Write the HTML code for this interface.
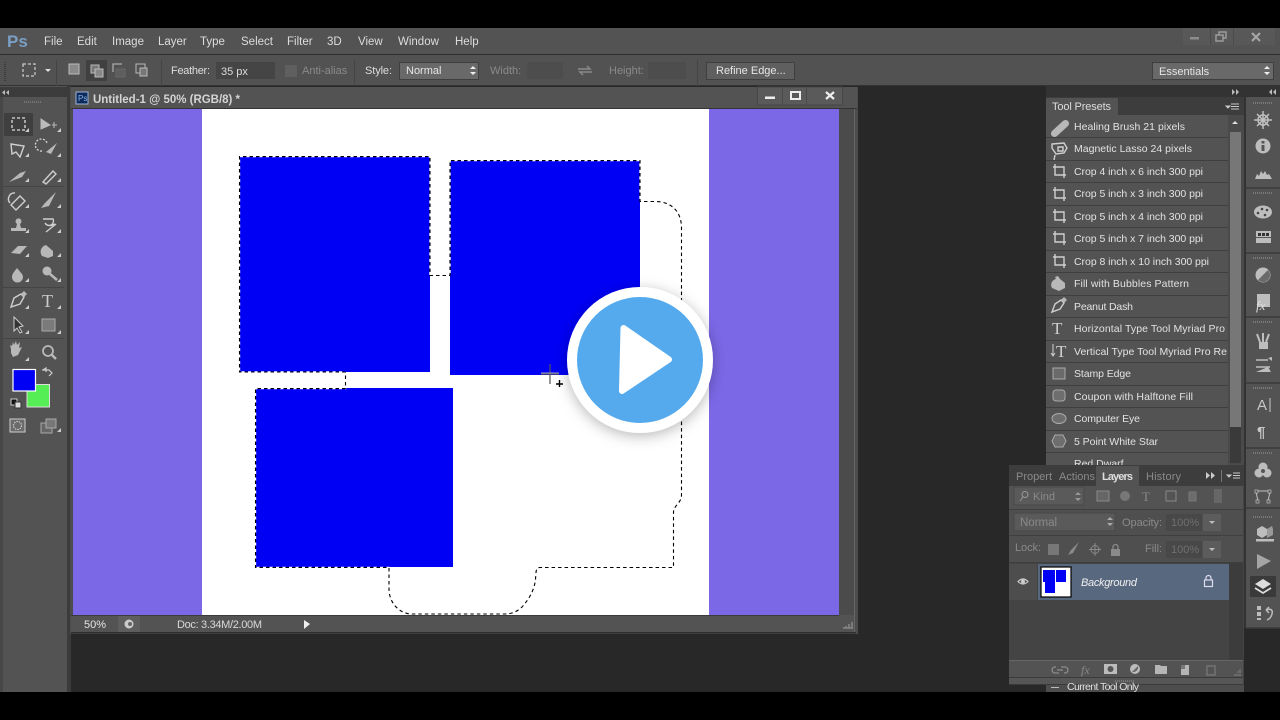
<!DOCTYPE html>
<html><head><meta charset="utf-8"><title>Photoshop</title><style>
html,body{margin:0;padding:0;background:#000;width:1280px;height:720px;overflow:hidden}
svg{display:block;filter:blur(.35px)}
text{font-family:"Liberation Sans",sans-serif;font-size:11px;fill:#dcdcdc}
.m{font-size:11.5px}
.p{font-size:10.5px;fill:#e2e2e2}
.dim{fill:#8a8a8a}
.ic{fill:none;stroke:#cfcfcf;stroke-width:1.4}
.ig{fill:#b8b8b8}
.sep{fill:#3f3f3f}
</style></head><body>
<svg width="1280" height="720" viewBox="0 0 1280 720" xmlns="http://www.w3.org/2000/svg">
<defs>
<filter id="sh" x="-30%" y="-30%" width="160%" height="160%"><feDropShadow dx="0" dy="3" stdDeviation="7" flood-color="#000" flood-opacity=".28"/></filter>
<g id="crop"><path class="ic" d="M-6-4H5V7M-4-7V4H7"/></g>
<path id="sel" d="M345.500 372H239.500V156.500H430V275.500H450V160.500H640V201.500H655C672 201.500 681.500 212 681.500 228V495C681.500 503 674 505 673.500 512V567.500H540C536 567.500 536 570 535.500 580C534 590 530 598 522 607C518 611 512 614 505 614H410C396 612 389 600 389 589V567.500H255.500V388.500H345.500V372"/>
</defs>
<rect width="1280" height="720" fill="#000"/>
<rect y="28" width="1280" height="664" fill="#282828"/>

<!-- menu and options -->
<rect y="28" width="1280" height="26" fill="#535353"/>
<rect y="54" width="1280" height="1" fill="#2e2e2e"/>
<rect y="55" width="1280" height="31" fill="#525252"/>
<rect y="85" width="1280" height="1" fill="#333"/>
<text x="7" y="47" style="font-size:17px;font-weight:bold;fill:#7b9ec4">Ps</text>
<text class="m" x="44" y="45">File</text><text class="m" x="77" y="45">Edit</text><text class="m" x="112" y="45">Image</text><text class="m" x="158" y="45">Layer</text><text class="m" x="200" y="45">Type</text><text class="m" x="241" y="45">Select</text><text class="m" x="287" y="45">Filter</text><text class="m" x="327" y="45">3D</text><text class="m" x="358" y="45">View</text><text class="m" x="398" y="45">Window</text><text class="m" x="455" y="45">Help</text>
<rect x="1183" y="28" width="92" height="17" fill="#585858"/>
<path d="M1210.500 28v17M1233.500 28v17" stroke="#4b4b4b"/>
<rect x="1190" y="37" width="9" height="2.500" fill="#8c8c8c"/>
<path d="M1216 35h7v6h-7zM1219 35v-3h7v6h-3" fill="none" stroke="#9a9a9a" stroke-width="1.500"/>
<path d="M1252 33l8 8M1260 33l-8 8" stroke="#a5a5a5" stroke-width="2.200"/>
<path d="M5 62v20" stroke="#3d3d3d" stroke-width="2" stroke-dasharray="1 1"/>
<rect x="23" y="64" width="12" height="12" fill="none" stroke="#ccc" stroke-width="1.200" stroke-dasharray="3 2"/>
<path d="M45 69h6l-3 3z" fill="#ddd"/>
<path d="M56.500 60v26M161.500 60v26M354.500 60v26M697.500 60v26" stroke="#444"/>
<rect x="69" y="64" width="10" height="10" fill="#8a8a8a" stroke="#bbb"/>
<rect x="86" y="60" width="21" height="21" fill="#404040"/>
<rect x="91" y="65" width="8" height="8" fill="#777" stroke="#bbb"/><rect x="95" y="69" width="8" height="8" fill="#888" stroke="#bbb"/>
<path d="M113 72v-8h9" fill="none" stroke="#aaa" stroke-width="1.300"/><rect x="116" y="69" width="9" height="8" fill="#5e5e5e" stroke="#666"/>
<rect x="136" y="64" width="9" height="9" fill="none" stroke="#bbb"/><rect x="140" y="68" width="7" height="8" fill="#777" stroke="#bbb"/>
<text x="171" y="74" textLength="39">Feather:</text>
<rect x="216" y="62" width="59" height="17" fill="#454545"/>
<text x="221" y="75">35 px</text>
<rect x="285" y="65" width="12" height="12" fill="#5f5f5f"/>
<text x="302" y="74" class="dim">Anti-alias</text>
<text x="365" y="74" textLength="27">Style:</text>
<rect x="399.500" y="62.500" width="79" height="17" fill="#696969" stroke="#3f3f3f"/>
<text x="406" y="74" style="fill:#e6e6e6">Normal</text>
<path d="M470 69l3-3 3 3zM470 72l3 3 3-3z" fill="#eee"/>
<text x="490" y="74" class="dim">Width:</text>
<rect x="527" y="62" width="36" height="17" fill="#4d4d4d"/>
<path d="M578 69h12l-3-3M592 72h-12l3 3" fill="none" stroke="#8a8a8a" stroke-width="1.500"/>
<text x="609" y="74" class="dim">Height:</text>
<rect x="648" y="62" width="38" height="17" fill="#4d4d4d"/>
<rect x="706.500" y="62.500" width="88" height="17" fill="#5f5f5f" stroke="#3f3f3f"/>
<text x="716" y="74" style="fill:#e6e6e6">Refine Edge...</text>
<rect x="1152.500" y="62.500" width="121" height="17" fill="#696969" stroke="#3f3f3f"/>
<text x="1159" y="75" style="fill:#e6e6e6">Essentials</text>
<path d="M1264 69l3-3 3 3zM1264 72l3 3 3-3z" fill="#eee"/>

<!-- tools panel -->
<rect y="86" width="67" height="606" fill="#535353"/>
<rect y="97" width="3" height="595" fill="#474747"/>
<rect x="67" y="86" width="4" height="606" fill="#3b3b3b"/>
<rect y="87" width="67" height="10" fill="#3c3c3c"/>
<path d="M9 90l-3 2.500 3 2.500zM5 90l-3 2.500 3 2.500z" fill="#bbb"/>
<path d="M24 102h18" stroke="#777" stroke-width="2" stroke-dasharray="1 1"/>
<rect x="4" y="113" width="29" height="23" fill="#3f3f3f"/>
<rect x="12" y="118" width="13" height="12" fill="none" stroke="#ddd" stroke-width="1.300" stroke-dasharray="3 2"/>
<path d="M41 119l9 6-9 4zM52 125h5M54 122v6" fill="#bbb" stroke="#bbb"/>
<path class="ic" d="M11 144l13 2-4 11-4-5-4 2z"/>
<path class="ic" d="M42 151a6 6 0 1 1 5-8" stroke-dasharray="2 1.500"/><path d="M46 152l11-9-6 11z" class="ig"/>
<path d="M9 182l11-9 6-2-4 6z" class="ig"/>
<path class="ic" d="M43 182l10-11 3 3-10 10z"/>
<path class="ic" d="M11 205l9-9 5 5-9 9zM10 203a6 6 0 0 1 5-10"/>
<path d="M41 208l4-5 11-11-7 14z" class="ig"/>
<path d="M11 231h15v-3h-5l-1-4a3 3 0 1 0-3 0l-1 4h-5z" class="ig"/>
<path class="ic" d="M43 219h10a4 4 0 0 1-8 4c4 5 10 1 10 1M46 232l10-8"/>
<path d="M11 253l7-7h9l-7 8z" class="ig"/>
<path d="M42 256a7 7 0 0 1 4-11l7 6v5l-5 2z" class="ig"/>
<path d="M17 268c-3 4-5 6-5 9a5 5 0 0 0 11 0c0-3-3-5-6-9z" class="ig"/>
<circle cx="47" cy="271" r="4.500" class="ig"/><path d="M50 274l7 6" stroke="#b8b8b8" stroke-width="2.500"/>
<path class="ic" d="M11 307l3-9 7-4 3 3-4 7z"/><path d="M21 294l3-3 3 3-3 3z" class="ig"/>
<text x="42" y="307" style="font-family:'Liberation Serif',serif;font-size:18px;fill:#ccc">T</text>
<path d="M14 317l9 9-4 1 3 5-2 1-3-5-3 3z" fill="#333" stroke="#ccc"/>
<rect x="42" y="319" width="13" height="12" fill="#7a7a7a" stroke="#aaa"/>
<path d="M11 353v-4l-1-4 2 1 1-4 1 3 2-4 1 4 3-3-1 6 3-1-4 8-5 2z" class="ig"/>
<circle cx="48" cy="351" r="5" fill="none" stroke="#b8b8b8" stroke-width="1.800"/><path d="M52 355l4 4" stroke="#b8b8b8" stroke-width="2.500"/>
<path d="M3 186.500h61M3 287.500h61M3 338.500h61" stroke="#444"/>
<path d="M29 132h-4l4-4zM61 132h-4l4-4zM29 157h-4l4-4zM61 157h-4l4-4zM29 182h-4l4-4zM61 182h-4l4-4zM29 208h-4l4-4zM61 208h-4l4-4zM29 233h-4l4-4zM61 233h-4l4-4zM29 257h-4l4-4zM61 257h-4l4-4zM29 282h-4l4-4zM61 282h-4l4-4zM29 309h-4l4-4zM61 309h-4l4-4zM29 334h-4l4-4zM61 334h-4l4-4zM29 361h-4l4-4zM61 432h-4l4-4z" fill="#ccc"/>
<rect x="27" y="384.500" width="22.500" height="22.500" fill="#55ee55" stroke="#ddd"/>
<rect x="13" y="369.500" width="22.500" height="21.500" fill="#0000f5" stroke="#fff" stroke-width="1.200"/>
<path d="M42 370h7l3 3-3 3M43 370l3-2v4" fill="none" stroke="#ccc" stroke-width="1.200"/>
<rect x="11" y="399" width="6" height="6" fill="#111" stroke="#ccc"/><rect x="15" y="402" width="6" height="6" fill="#ddd" stroke="#333"/>
<rect x="10" y="419" width="15" height="13" fill="#6b6b6b" stroke="#ccc"/><circle cx="17.500" cy="425.500" r="4" fill="none" stroke="#ddd" stroke-dasharray="1.500 1"/>
<rect x="41" y="423" width="11" height="10" fill="#666" stroke="#aaa"/><rect x="46" y="419" width="10" height="9" fill="#777" stroke="#aaa"/>

<!-- document window -->
<rect x="70" y="87" width="788" height="547" fill="#4c4c4c"/>
<rect x="71" y="87" width="786" height="22" fill="#535353"/>
<rect x="71" y="108" width="786" height="1" fill="#333"/>
<rect x="73" y="109" width="766" height="506" fill="#7b68e6"/>
<rect x="202" y="109" width="507" height="506" fill="#fff"/>
<rect x="839" y="109" width="15" height="506" fill="#4b4b4b"/>
<rect x="854" y="109" width="1" height="525" fill="#666"/>
<rect x="71" y="615" width="783" height="18" fill="#535353"/>
<rect x="71" y="632" width="785" height="1.500" fill="#2f2f2f"/>
<rect x="71" y="615" width="768" height="1" fill="#3a3a3a"/>
<rect x="76" y="92" width="12" height="12" fill="#0c2a5c" stroke="#9fb4d4"/>
<text x="78" y="101" style="font-size:8px;fill:#8fb5e8">Ps</text>
<text x="93" y="103" style="font-size:11.5px;font-weight:bold;fill:#d4d4d4" textLength="147">Untitled-1 @ 50% (RGB/8) *</text>
<rect x="757.500" y="87" width="85" height="18" fill="#5a5a5a" stroke="#454545"/>
<path d="M782.500 87v18M806.500 87v18" stroke="#4a4a4a"/>
<rect x="765" y="96.500" width="10" height="2.500" fill="#eee"/>
<rect x="791" y="92" width="9" height="7" fill="none" stroke="#eee" stroke-width="2"/>
<path d="M826 92l8 7M834 92l-8 7" stroke="#eee" stroke-width="2.200"/>
<text x="84" y="628" style="fill:#e4e4e4">50%</text>
<rect x="118" y="616" width="22" height="16" fill="#5e5e5e"/>
<circle cx="129" cy="624" r="4.500" fill="#ccc"/><circle cx="130" cy="624" r="2" fill="#666"/>
<text x="177" y="628" style="fill:#d8d8d8" textLength="85">Doc: 3.34M/2.00M</text>
<path d="M304 620l6 4-6 5z" fill="#eee"/>
<path d="M843 628h10M846 628v-2M849 628v-4M852 628v-6" stroke="#888" stroke-width="1.500"/>

<!-- canvas content -->
<rect x="239" y="156" width="191" height="216" fill="#0000f5"/>
<rect x="450" y="160" width="190" height="215" fill="#0000f5"/>
<rect x="255" y="388" width="198" height="179" fill="#0000f5"/>
<use href="#sel" fill="none" stroke="#fff" stroke-width="1.400" stroke-dasharray="3.500 3" stroke-dashoffset="3.500"/>
<use href="#sel" fill="none" stroke="#000" stroke-width="1.100" stroke-dasharray="3.500 3"/>

<!-- cursor -->
<path d="M550 364v20M541 374h18" stroke="#555" stroke-width="1.200"/>
<path d="M541 373h18" stroke="#ccc" stroke-width=".8"/>
<path d="M556 384h7M559.500 380v7" stroke="#000" stroke-width="1.400"/>

<!-- tool presets -->
<rect x="1046" y="86" width="234" height="11" fill="#333"/>
<path d="M1232 89l3 3-3 3zM1236 89l3 3-3 3zM1272 89l-3 3 3 3zM1276 89l-3 3 3 3z" fill="#bbb"/>
<rect x="1046" y="97" width="198" height="18" fill="#3d3d3d"/>
<rect x="1046" y="98" width="72" height="17" fill="#535353"/>
<text x="1052" y="110" style="fill:#dcdcdc;font-size:11px" textLength="59">Tool Presets</text>
<path d="M1226 106h4l-2 2zM1231 104h8M1231 106.500h8M1231 109h8" stroke="#c8c8c8" fill="#c8c8c8"/>
<rect x="1046" y="115" width="182" height="350" fill="#535353"/>
<rect x="1228" y="115" width="16" height="350" fill="#4a4a4a"/>
<rect x="1230" y="132" width="11" height="295" fill="#777"/>
<rect x="1230" y="427" width="11" height="36" fill="#3a3a3a"/>
<path d="M1232 124h6l-3-3z" fill="#ddd"/>
<g class="sep">
<rect x="1046" y="137" width="182" height="1"/><rect x="1046" y="160" width="182" height="1"/><rect x="1046" y="182" width="182" height="1"/><rect x="1046" y="205" width="182" height="1"/><rect x="1046" y="227" width="182" height="1"/><rect x="1046" y="250" width="182" height="1"/><rect x="1046" y="272" width="182" height="1"/><rect x="1046" y="295" width="182" height="1"/><rect x="1046" y="317" width="182" height="1"/><rect x="1046" y="340" width="182" height="1"/><rect x="1046" y="362" width="182" height="1"/><rect x="1046" y="385" width="182" height="1"/><rect x="1046" y="407" width="182" height="1"/><rect x="1046" y="430" width="182" height="1"/><rect x="1046" y="452" width="182" height="1"/>
</g>
<text class="p" x="1074" y="130" textLength="111">Healing Brush 21 pixels</text>
<text class="p" x="1074" y="152" textLength="118">Magnetic Lasso 24 pixels</text>
<text class="p" x="1074" y="175" textLength="129">Crop 4 inch x 6 inch 300 ppi</text>
<text class="p" x="1074" y="197" textLength="129">Crop 5 inch x 3 inch 300 ppi</text>
<text class="p" x="1074" y="220" textLength="129">Crop 5 inch x 4 inch 300 ppi</text>
<text class="p" x="1074" y="242" textLength="129">Crop 5 inch x 7 inch 300 ppi</text>
<text class="p" x="1074" y="265" textLength="135">Crop 8 inch x 10 inch 300 ppi</text>
<text class="p" x="1074" y="287" textLength="115">Fill with Bubbles Pattern</text>
<text class="p" x="1074" y="310" textLength="59">Peanut Dash</text>
<text class="p" x="1074" y="332" textLength="151">Horizontal Type Tool Myriad Pro</text>
<text class="p" x="1074" y="355" textLength="153">Vertical Type Tool Myriad Pro Re</text>
<text class="p" x="1074" y="377" textLength="57">Stamp Edge</text>
<text class="p" x="1074" y="400" textLength="119">Coupon with Halftone Fill</text>
<text class="p" x="1074" y="422" textLength="66">Computer Eye</text>
<text class="p" x="1074" y="445" textLength="84">5 Point White Star</text>
<text class="p" x="1074" y="467">Red Dwarf</text>
<path d="M1052 131l11-10a3 3 0 0 1 5 5l-11 10a3 3 0 0 1-5-5z" class="ig"/>
<path class="ic" d="M1052 144l12-1 3 5-3 5-8 1-4-6zM1055 155l-1 5"/><path class="ic" d="M1058 147h5v4h-5z"/>
<use href="#crop" x="1059" y="171"/><use href="#crop" x="1059" y="194"/><use href="#crop" x="1059" y="216"/><use href="#crop" x="1059" y="238"/><use href="#crop" x="1059" y="261"/>
<path d="M1052 288a6 6 0 0 1 4-9l-1-2 3-1 2 3 5 4v5l-6 3z" class="ig"/>
<path class="ic" d="M1052 312l3-8 6-4 3 3-4 6z"/><path d="M1061 300l3-3 3 3-3 3z" class="ig"/>
<text x="1052" y="334" style="font-family:'Liberation Serif',serif;font-size:17px;fill:#d0d0d0">T</text>
<text x="1056" y="357" style="font-family:'Liberation Serif',serif;font-size:17px;fill:#d0d0d0">T</text>
<path d="M1053 344v12m-2-3l2 3 2-3" fill="none" stroke="#d0d0d0"/>
<rect x="1053" y="368" width="12" height="11" fill="#6a6a6a" stroke="#aaa"/>
<rect x="1053" y="390" width="12" height="11" rx="3" fill="#6e6e6e" stroke="#aaa"/>
<ellipse cx="1059" cy="418.500" rx="7" ry="5" fill="#6e6e6e" stroke="#aaa"/>
<path d="M1055 435h8l3 6-3 6h-8l-3-6z" fill="#6e6e6e" stroke="#aaa"/>

<!-- icon dock -->
<rect x="1244" y="97" width="36" height="531" fill="#535353"/>
<rect x="1244" y="97" width="2" height="531" fill="#333"/>
<path d="M1246 188h34M1246 253h34M1246 317h34M1246 383h34M1246 448h34M1246 508h34M1246 628h34" stroke="#3a3a3a" stroke-width="1.500"/>
<path d="M1253 103h20M1253 193h20M1253 258h20M1253 322h20M1253 388h20M1253 453h20M1253 517h20" stroke="#7a7a7a" stroke-width="2" stroke-dasharray="1 1"/>
<g fill="none" stroke="#c0c0c0" stroke-width="1.500"><circle cx="1263" cy="120" r="5"/><path d="M1263 111v18M1254 120h18M1257 114l12 12M1269 114l-12 12"/></g>
<circle cx="1263" cy="146" r="7.500" fill="#bdbdbd"/><rect x="1261.500" y="145" width="3" height="6" fill="#555"/><rect x="1261.500" y="141" width="3" height="2.500" fill="#555"/>
<path d="M1255 179l2-5 2 2 2-5 2 3 2-3 2 4 2-1 3 5z" fill="#bdbdbd"/>
<ellipse cx="1263" cy="212" rx="9" ry="6.500" fill="#bdbdbd"/><circle cx="1258" cy="213" r="1.300" fill="#444"/><circle cx="1262" cy="209" r="1.300" fill="#444"/><circle cx="1267" cy="210" r="1.300" fill="#444"/><circle cx="1265" cy="215" r="1.300" fill="#444"/>
<rect x="1256" y="231" width="15" height="12" fill="#bdbdbd"/><path d="M1258 233h3v3h-3zM1262 233h3v3h-3zM1266 233h3v3h-3z" fill="#333"/><path d="M1256 237.500h15" stroke="#555"/>
<circle cx="1263" cy="275" r="7.500" fill="#bdbdbd"/><path d="M1258 280l10-10a7 7 0 0 1-10 10z" fill="#6a6a6a"/>
<rect x="1257" y="294" width="13" height="13" fill="#bdbdbd"/><text x="1256" y="310" style="font-family:'Liberation Serif',serif;font-style:italic;font-size:13px;fill:#ddd">fx</text>
<rect x="1259" y="342" width="9" height="7" fill="#bdbdbd"/><path d="M1260 342l-3-8M1263 342v-9M1266 342l3-8" stroke="#bdbdbd" stroke-width="2"/>
<path d="M1256 360h12M1256 367h14" stroke="#bdbdbd" stroke-width="1.500"/><path d="M1256 372l12-5 3 5zM1268 358l4-1v4z" fill="#bdbdbd"/>
<text x="1257" y="410" style="font-size:15px;fill:#c8c8c8">A</text><path d="M1270 398v14" stroke="#c8c8c8"/>
<text x="1257" y="437" style="font-size:15px;font-weight:bold;fill:#c8c8c8">¶</text>
<circle cx="1263" cy="467" r="4.500" fill="#bdbdbd"/><circle cx="1259" cy="473" r="4.500" fill="#bdbdbd"/><circle cx="1267" cy="473" r="4.500" fill="#bdbdbd"/><circle cx="1263" cy="471" r="2" fill="#555"/>
<path d="M1257 491h12M1256 492l2 9M1270 492l-2 9" fill="none" stroke="#c0c0c0"/><rect x="1255" y="490" width="3" height="3" fill="#555" stroke="#c0c0c0" stroke-width=".7"/><rect x="1268" y="490" width="3" height="3" fill="#555" stroke="#c0c0c0" stroke-width=".7"/><rect x="1256" y="500" width="3" height="3" fill="#555" stroke="#c0c0c0" stroke-width=".7"/><rect x="1267" y="500" width="3" height="3" fill="#555" stroke="#c0c0c0" stroke-width=".7"/>
<path d="M1257 529l5-3 5 3v6l-5 3-5-3z" fill="#bdbdbd"/><path d="M1267 529l5-3 1 3v6l-6 3z" fill="#999"/><rect x="1256" y="539" width="18" height="2.500" fill="#bdbdbd"/>
<path d="M1257 554l14 7-14 8z" fill="#a5a5a5"/>
<rect x="1250" y="576" width="26" height="21" rx="1" fill="#3a3a3a"/>
<path d="M1263 579l8 5-8 5-8-5z" fill="#ddd"/><path d="M1255 588l8 5 8-5" fill="none" stroke="#ddd" stroke-width="1.800"/>
<path d="M1257 606h4v4h-4zM1257 612h4v4h-4zM1257 618h4v2h-4z" fill="#bdbdbd"/><path d="M1266 610c5-2 7 0 6 4s-3 5-5 6M1266 610l3-3M1266 610l3 3" fill="none" stroke="#bdbdbd" stroke-width="1.500"/>

<!-- layers panel -->
<rect x="1009" y="465" width="235" height="220" fill="#444"/>
<rect x="1009" y="465" width="235" height="21" fill="#3d3d3d"/>
<rect x="1096" y="466" width="43" height="20" fill="#535353"/>
<text x="1016" y="480" class="dim" textLength="36">Propert</text>
<text x="1059" y="480" class="dim" textLength="36">Actions</text>
<text x="1102" y="480" style="font-weight:bold;fill:#dedede" textLength="31">Layers</text>
<text x="1146" y="480" class="dim" textLength="35">History</text>
<path d="M1206 472l4 3.500-4 3.500zM1211 472l4 3.500-4 3.500z" fill="#ccc"/>
<path d="M1221.500 470v12" stroke="#777"/>
<path d="M1227 475h4l-2 2zM1233 473h7M1233 475.500h7M1233 478h7" stroke="#c8c8c8" fill="#c8c8c8"/>
<rect x="1009" y="486" width="234" height="24" fill="#535353"/>
<rect x="1014" y="487" width="70" height="18" fill="#5a5a5a" stroke="#484848"/>
<circle cx="1025" cy="494.500" r="3" fill="none" stroke="#999"/><path d="M1023 497l-3 4" stroke="#999"/>
<text x="1033" y="500" class="dim">Kind</text>
<path d="M1075 495l3-3 3 3zM1075 498l3 3 3-3z" fill="#999"/>
<rect x="1097" y="491" width="12" height="10" fill="#666" stroke="#8a8a8a"/>
<circle cx="1125" cy="496" r="5" fill="#777"/>
<text x="1142" y="501" style="font-family:'Liberation Serif',serif;font-size:13px;fill:#8a8a8a">T</text>
<rect x="1166" y="491" width="10" height="10" fill="none" stroke="#8a8a8a"/>
<rect x="1189" y="492" width="7" height="9" fill="#6c6c6c" stroke="#777"/>
<rect x="1214" y="489" width="8" height="14" fill="#666"/>
<rect x="1009" y="509" width="234" height="1" fill="#3f3f3f"/>
<rect x="1009" y="510" width="234" height="25" fill="#4f4f4f"/>
<rect x="1014" y="513" width="101" height="18" fill="#5a5a5a" stroke="#484848"/>
<text x="1020" y="526" class="dim" style="font-size:11.5px">Normal</text>
<path d="M1107 520l3-3 3 3zM1107 523l3 3 3-3z" fill="#aaa"/>
<text x="1122" y="526" class="dim" textLength="40">Opacity:</text>
<rect x="1166" y="514" width="36" height="17" fill="#484848"/>
<text x="1171" y="526" style="fill:#6f6f6f">100%</text>
<rect x="1203" y="514" width="18" height="17" fill="#5c5c5c"/>
<path d="M1209 521h6l-3 3z" fill="#bbb"/>
<rect x="1009" y="535" width="234" height="1" fill="#3f3f3f"/>
<rect x="1009" y="536" width="234" height="26" fill="#4f4f4f"/>
<text x="1015" y="551" class="dim" textLength="26">Lock:</text>
<rect x="1048" y="544" width="11" height="11" fill="#777"/>
<path d="M1068 555l3-5 8-8-6 11z" fill="#8a8a8a"/>
<path d="M1095 543v13M1089 549.500h12" stroke="#8a8a8a"/><circle cx="1095" cy="549.500" r="4" fill="none" stroke="#8a8a8a"/>
<rect x="1111" y="549" width="9" height="7" fill="#8a8a8a"/><path d="M1113 549v-2a2.500 2.500 0 0 1 5 0v2" fill="none" stroke="#8a8a8a" stroke-width="1.300"/>
<text x="1145" y="552" class="dim">Fill:</text>
<rect x="1166" y="541" width="36" height="17" fill="#484848"/>
<text x="1171" y="553" style="fill:#6f6f6f">100%</text>
<rect x="1203" y="541" width="18" height="17" fill="#5c5c5c"/>
<path d="M1209 548h6l-3 3z" fill="#bbb"/>
<rect x="1009" y="562" width="234" height="1" fill="#3f3f3f"/>
<rect x="1009" y="564" width="28" height="36" fill="#4d4d4d"/>
<rect x="1038" y="564" width="191" height="36" fill="#58697f"/>
<rect x="1229" y="563" width="14" height="97" fill="#3c3c3c"/>
<path d="M1018 581.500q5-5 10 0q-5 5-10 0z" fill="none" stroke="#cfcfcf" stroke-width="1.200"/><circle cx="1023" cy="581.500" r="2" fill="#cfcfcf"/>
<rect x="1041" y="567" width="30" height="30" fill="#fff" stroke="#000" stroke-width="1.200"/>
<rect x="1043" y="570" width="12" height="12" fill="#0000f5"/><rect x="1056" y="570" width="10" height="12" fill="#0000f5"/><rect x="1045" y="582" width="10" height="11" fill="#0000f5"/>
<text x="1081" y="586" style="font-style:italic;fill:#f0f0f0" textLength="56">Background</text>
<rect x="1204.500" y="580" width="8" height="6.500" fill="none" stroke="#dde" stroke-width="1.200"/><path d="M1206 580v-2a2.500 2.500 0 0 1 5 0v2" fill="none" stroke="#dde" stroke-width="1.200"/>
<rect x="1009" y="660" width="234" height="1" fill="#666"/>
<rect x="1009" y="661" width="234" height="16" fill="#535353"/>
<path d="M1056 667h-1a3 3 0 0 0 0 6h4M1061 667h4a3 3 0 0 1 0 6h-1M1057 670h6" fill="none" stroke="#8a8a8a" stroke-width="1.300"/>
<text x="1081" y="674" style="font-family:'Liberation Serif',serif;font-style:italic;font-size:12px;fill:#888">fx</text>
<rect x="1104" y="664" width="13" height="10" fill="#bbb"/><circle cx="1110.500" cy="669" r="3" fill="#555"/>
<circle cx="1135" cy="669" r="5" fill="#bbb"/><path d="M1132 672l6-6a5 5 0 0 1-6 6z" fill="#666"/>
<path d="M1155 665h5l1 1h6v8h-12z" fill="#b5b5b5"/>
<path d="M1181 665h8v10h-8z" fill="#b5b5b5"/><path d="M1181 665h4v4h-4z" fill="#777"/>
<path d="M1206 666h10M1207 667v8h8v-8" fill="none" stroke="#7a7a7a" stroke-width="1.200"/>
<path d="M1234 675h7M1237 672h4M1240 669v2" stroke="#777" stroke-width="1.200"/>
<rect x="1009" y="677" width="234" height="1" fill="#3a3a3a"/>
<rect x="1009" y="678" width="234" height="6" fill="#565656"/>
<path d="M1115 681h20" stroke="#777" stroke-width="2" stroke-dasharray="1 1"/>
<rect x="1009" y="684" width="234" height="1" fill="#3a3a3a"/>
<rect x="1046" y="685" width="198" height="7" fill="#4d4d4d"/>
<svg x="1046" y="685" width="198" height="7" viewBox="1046 685 198 7"><text x="1067" y="690" style="font-size:10.5px;fill:#e0e0e0" textLength="72">Current Tool Only</text><rect x="1051" y="687" width="8" height="1" fill="#bbb"/></svg>

<!-- play button -->
<circle cx="640" cy="360" r="73" fill="#fff" filter="url(#sh)"/>
<circle cx="640" cy="360" r="63" fill="#55aaee"/>
<path d="M623.500 328L669 359.500 622 391z" fill="#fff" stroke="#fff" stroke-width="6" stroke-linejoin="round"/>
</svg>
</body></html>
